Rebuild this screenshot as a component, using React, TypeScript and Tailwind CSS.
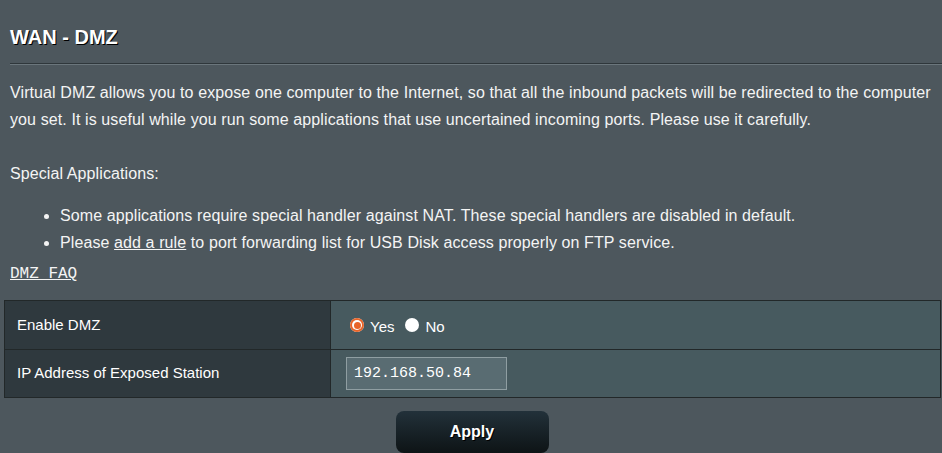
import React, { useState } from 'react';

const sans = { fontFamily: '"Liberation Sans", Arial, sans-serif' };

const Radio = ({ checked, label, onClick, className = '' }) => (
  <button onClick={onClick} className={`flex items-center ${className}`}>
    <span className="w-[14px] h-[14px] rounded-full bg-white flex items-center justify-center">
      {checked && (
        <span className="w-[14px] h-[14px] rounded-full bg-[#e8652a] flex items-center justify-center">
          <span className="w-[10px] h-[10px] rounded-full bg-white flex items-center justify-center">
            <span className="w-[7px] h-[7px] rounded-full bg-[#e8652a]"></span>
          </span>
        </span>
      )}
    </span>
    <span className="ml-[6px] mt-[4px]">{label}</span>
  </button>
);

function App() {
  const [enabled, setEnabled] = useState(true);
  const [ip, setIp] = useState('192.168.50.84');

  return (
    <div className="w-[942px] h-[453px] overflow-hidden bg-[#4d575d] text-white font-['Liberation_Sans',Arial,sans-serif]">
      {/* Header */}
      <div className="pl-[10px] pt-[26px]">
        <h1 className="text-[20px] leading-[22px] font-bold [text-shadow:1px_1px_0_#000]">WAN - DMZ</h1>
        <div className="mt-[15px] h-[2px] border-t border-[#2f373b] bg-[#6b767c]"></div>
      </div>

      {/* Description */}
      <div className="px-[10px] pt-[14px] text-[16px] leading-[27px] text-[#f4f4f4] tracking-[0.1px]">
        <p>
          Virtual DMZ allows you to expose one computer to the Internet, so that all the inbound packets will be redirected to the computer you set. It is useful while you run some applications that use uncertained incoming ports. Please use it carefully.
        </p>
        <p className="mt-[27px]">Special Applications:</p>
        <ul className="mt-[15px] pl-[50px] list-disc">
          <li>Some applications require special handler against NAT. These special handlers are disabled in default.</li>
          <li>
            Please <span className="underline">add a rule</span> to port forwarding list for USB Disk access properly on FTP service.
          </li>
        </ul>
        <div className="mt-[8px] text-[16px] leading-[20px] tracking-normal underline font-['Liberation_Mono',monospace]">DMZ_FAQ</div>
      </div>

      {/* Settings table */}
      <div className="mx-[4px] mt-[16px] w-[937px] border border-[#222829] text-[15px]" style={sans}>
        <div className="flex h-[49px] border-b border-[#222829]">
          <div className="w-[326px] bg-[#2f393e] border-r border-[#222829] flex items-center pl-[12px]">Enable DMZ</div>
          <div className="flex-1 bg-[#475a5f] flex items-center pl-[19px]">
            <Radio checked={enabled} label="Yes" onClick={() => setEnabled(true)} />
            <Radio checked={!enabled} label="No" onClick={() => setEnabled(false)} className="ml-[11px]" />
          </div>
        </div>
        <div className="flex h-[47px]">
          <div className="w-[326px] bg-[#2f393e] border-r border-[#222829] flex items-center pl-[12px]">IP Address of Exposed Station</div>
          <div className="flex-1 bg-[#475a5f] flex items-center pl-[15px]">
            <input
              value={ip}
              onChange={(e) => setIp(e.target.value)}
              className="w-[161px] h-[33px] bg-[#596c72] border border-[#8f9ea2] px-[7px] text-[15px] text-white outline-none font-['Liberation_Mono',monospace]"
            />
          </div>
        </div>
      </div>

      {/* Apply */}
      <div className="flex justify-center mt-[13px] pl-[2px]">
        <button className="w-[153px] h-[42px] rounded-[8px] bg-gradient-to-b from-[#22313a] to-[#0e1416] text-[16px] font-bold text-white [text-shadow:1px_1px_0_#000]" style={sans}>
          Apply
        </button>
      </div>
    </div>
  );
}

export default App;
